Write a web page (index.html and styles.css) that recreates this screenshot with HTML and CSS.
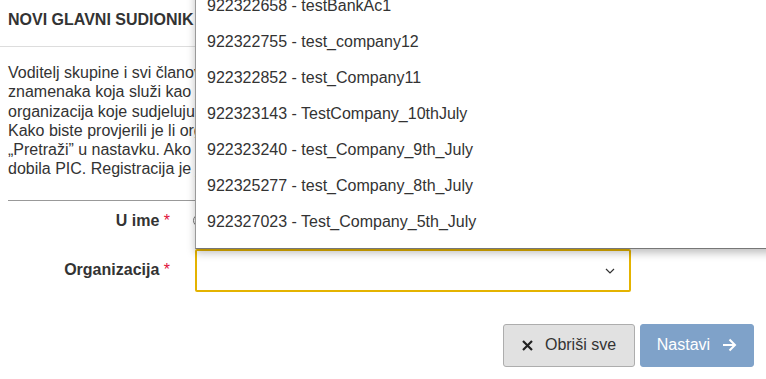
FILE: index.html
```html
<!DOCTYPE html>
<html lang="hr">

<head>
    <meta charset="UTF-8">
    <meta name="viewport" content="width=device-width, initial-scale=1.0">
    <link rel="stylesheet" href="styles.css">
    <title>Novi glavni sudionik</title>
</head>

<body>
    <div class="top">
        <h2 class="title">NOVI GLAVNI SUDIONIK</h2>
    </div>
    <div class="content">
        <p class="intro">
            Voditelj skupine i svi članovi moraju imati identifikacijski kod sudionika (PIC), jedinstveni broj<br>
            znamenaka koja služi kao jedinstveni identifikator organizacije u programima EU-a.<br>
            organizacija koje sudjeluju u programima EU-a već su se registrirale i imaju PIC.<br>
            Kako biste provjerili je li organizacija već registrirana, upotrijebite funkciju<br>
            „Pretraži” u nastavku. Ako se organizacija ne pojavi, to znači da se još nije registrirala i<br>
            dobila PIC. Registracija je jednostavna i brza.
        </p>
        <hr class="line">

        <div class="row row-first">
            <label class="label">U ime <span class="req">*</span></label>
            <div class="field">
                <span class="radio"></span>
                <span class="radio-text">Organizacije</span>
            </div>
        </div>

        <div class="row">
            <label class="label">Organizacija <span class="req">*</span></label>
            <div class="field">
                <div class="select">
                    <span class="chevron">
                        <svg width="10" height="6" viewBox="0 0 10 6">
                            <path d="M1 1 L5 5 L9 1" fill="none" stroke="#333" stroke-width="1.2"/>
                        </svg>
                    </span>
                    <ul class="options">
                        <li>922322658 - testBankAc1</li>
                        <li>922322755 - test_company12</li>
                        <li>922322852 - test_Company11</li>
                        <li>922323143 - TestCompany_10thJuly</li>
                        <li>922323240 - test_Company_9th_July</li>
                        <li>922325277 - test_Company_8th_July</li>
                        <li>922327023 - Test_Company_5th_July</li>
                    </ul>
                </div>
            </div>
        </div>

        <div class="buttons">
            <button class="btn btn-clear">
                <svg width="11" height="11" viewBox="0 0 11 11">
                    <path d="M1 1 L10 10 M10 1 L1 10" stroke="#222" stroke-width="2.2"/>
                </svg>
                Obriši sve
            </button>
            <button class="btn btn-next">
                Nastavi
                <svg width="15" height="14" viewBox="0 0 15 14">
                    <path d="M1 7 H13 M7.5 1.5 L13 7 L7.5 12.5" fill="none" stroke="#fff" stroke-width="2"/>
                </svg>
            </button>
        </div>
    </div>
</body>

</html>
```

FILE: styles.css
```css
* {
    margin: 0;
    padding: 0;
    box-sizing: border-box;
}

html,
body {
    overflow: hidden;
}

body {
    font-family: "Liberation Sans", Arial, sans-serif;
    font-size: 16px;
    color: #333;
    background: white;
}

.top {
    height: 47px;
    border-bottom: 1px solid #ddd;
    padding: 10px 8px 0;
}

.title {
    font-size: 16px;
    font-weight: bold;
    line-height: 19px;
}

.content {
    padding: 16px 12px 0 8px;
}

.intro {
    line-height: 19.3px;
    white-space: nowrap;
}

.line {
    border: none;
    border-top: 1px solid #999;
    margin-top: 21px;
}

.row {
    display: flex;
    align-items: center;
    gap: 25px;
}

.row-first {
    height: 40px;
    margin-bottom: 8px;
}

.label {
    width: 162px;
    text-align: right;
    font-weight: bold;
}

.req {
    color: #e0103a;
    font-weight: normal;
}

.field {
    display: flex;
    align-items: center;
    gap: 8px;
}

.radio {
    width: 13px;
    height: 13px;
    border: 1px solid #767676;
    border-radius: 50%;
    margin-left: -2px;
}

.select {
    position: relative;
    width: 436px;
    height: 43px;
    border: 2px solid #e4b300;
    border-radius: 2px;
}

.chevron {
    position: absolute;
    right: 14px;
    top: 17px;
    display: flex;
}

.options {
    position: absolute;
    left: -2px;
    bottom: calc(100% + 2px);
    width: 620px;
    list-style: none;
    background: white;
    border: 1px solid #999;
    border-bottom-color: #777;
    padding: 10px 0 8px;
    box-shadow: 0 4px 8px rgba(0, 0, 0, 0.25);
}

.options li {
    height: 36px;
    line-height: 36px;
    padding-left: 11px;
    white-space: nowrap;
}

.buttons {
    display: flex;
    justify-content: flex-end;
    gap: 5px;
    margin-top: 32px;
}

.btn {
    height: 43px;
    display: flex;
    align-items: center;
    justify-content: center;
    gap: 12px;
    font-family: "Liberation Sans", Arial, sans-serif;
    font-size: 16px;
    border-radius: 3px;
}

.btn-clear {
    width: 132px;
    background: #e1e1e1;
    border: 1px solid #adadad;
    color: #333;
}

.btn-next {
    width: 114px;
    background: #7fa2c9;
    border: 1px solid #7fa2c9;
    color: white;
}
```
